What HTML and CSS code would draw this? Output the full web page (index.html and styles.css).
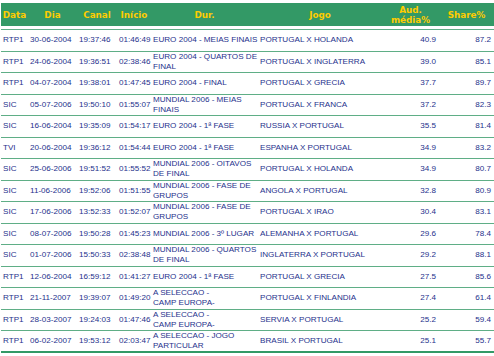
FILE: index.html
```html
<!DOCTYPE html>
<html lang="pt">
<head>
<meta charset="utf-8">
<title>Audiências</title>
<link rel="stylesheet" href="styles.css">
</head>
<body>
<table class="aud">
  <colgroup>
    <col class="c1"><col class="c2"><col class="c3"><col class="c4"><col class="c5"><col class="c6"><col class="c7"><col class="c8">
  </colgroup>
  <thead>
    <tr>
      <th>Data</th><th>Dia</th><th>Canal</th><th>Início</th><th>Dur.</th><th>Jogo</th><th>Aud.<br>média%</th><th>Share%</th>
    </tr>
  </thead>
  <tbody>
    <tr><td>RTP1</td><td>30-06-2004</td><td>19:37:46</td><td>01:46:49</td><td>EURO 2004 - MEIAS FINAIS</td><td>PORTUGAL X HOLANDA</td><td class="num">40.9</td><td class="num">87.2</td></tr>
    <tr><td>RTP1</td><td>24-06-2004</td><td>19:36:51</td><td>02:38:46</td><td>EURO 2004 - QUARTOS DE<br>FINAL</td><td>PORTUGAL X INGLATERRA</td><td class="num">39.0</td><td class="num">85.1</td></tr>
    <tr><td>RTP1</td><td>04-07-2004</td><td>19:38:01</td><td>01:47:45</td><td>EURO 2004 - FINAL</td><td>PORTUGAL X GRECIA</td><td class="num">37.7</td><td class="num">89.7</td></tr>
    <tr><td>SIC</td><td>05-07-2006</td><td>19:50:10</td><td>01:55:07</td><td>MUNDIAL 2006 - MEIAS<br>FINAIS</td><td>PORTUGAL X FRANCA</td><td class="num">37.2</td><td class="num">82.3</td></tr>
    <tr><td>SIC</td><td>16-06-2004</td><td>19:35:09</td><td>01:54:17</td><td>EURO 2004 - 1ª FASE</td><td>RUSSIA X PORTUGAL</td><td class="num">35.5</td><td class="num">81.4</td></tr>
    <tr><td>TVI</td><td>20-06-2004</td><td>19:36:12</td><td>01:54:44</td><td>EURO 2004 - 1ª FASE</td><td>ESPANHA X PORTUGAL</td><td class="num">34.9</td><td class="num">83.2</td></tr>
    <tr><td>SIC</td><td>25-06-2006</td><td>19:51:52</td><td>01:55:52</td><td>MUNDIAL 2006 - OITAVOS<br>DE FINAL</td><td>PORTUGAL X HOLANDA</td><td class="num">34.9</td><td class="num">80.7</td></tr>
    <tr><td>SIC</td><td>11-06-2006</td><td>19:52:06</td><td>01:51:55</td><td>MUNDIAL 2006 - FASE DE<br>GRUPOS</td><td>ANGOLA X PORTUGAL</td><td class="num">32.8</td><td class="num">80.9</td></tr>
    <tr><td>SIC</td><td>17-06-2006</td><td>13:52:33</td><td>01:52:07</td><td>MUNDIAL 2006 - FASE DE<br>GRUPOS</td><td>PORTUGAL X IRAO</td><td class="num">30.4</td><td class="num">83.1</td></tr>
    <tr><td>SIC</td><td>08-07-2006</td><td>19:50:28</td><td>01:45:23</td><td>MUNDIAL 2006 - 3º LUGAR</td><td>ALEMANHA X PORTUGAL</td><td class="num">29.6</td><td class="num">78.4</td></tr>
    <tr><td>SIC</td><td>01-07-2006</td><td>15:50:33</td><td>02:38:48</td><td>MUNDIAL 2006 - QUARTOS<br>DE FINAL</td><td>INGLATERRA X PORTUGAL</td><td class="num">29.2</td><td class="num">88.1</td></tr>
    <tr><td>RTP1</td><td>12-06-2004</td><td>16:59:12</td><td>01:41:27</td><td>EURO 2004 - 1ª FASE</td><td>PORTUGAL X GRECIA</td><td class="num">27.5</td><td class="num">85.6</td></tr>
    <tr><td>RTP1</td><td>21-11-2007</td><td>19:39:07</td><td>01:49:20</td><td>A SELECCAO -<br>CAMP EUROPA-</td><td>PORTUGAL X FINLANDIA</td><td class="num">27.4</td><td class="num">61.4</td></tr>
    <tr><td>RTP1</td><td>28-03-2007</td><td>19:24:03</td><td>01:47:46</td><td>A SELECCAO -<br>CAMP EUROPA-</td><td>SERVIA X PORTUGAL</td><td class="num">25.2</td><td class="num">59.4</td></tr>
    <tr class="last"><td>RTP1</td><td>06-02-2007</td><td>19:53:12</td><td>02:03:47</td><td>A SELECCAO - JOGO<br>PARTICULAR</td><td>BRASIL X PORTUGAL</td><td class="num">25.1</td><td class="num">55.7</td></tr>
  </tbody>
</table>
</body>
</html>
```
FILE: styles.css
```css
html, body {
  margin: 0;
  padding: 0;
  background: #ffffff;
}

.aud {
  margin: 3px 0 0 1px;
  width: 493px;
  table-layout: fixed;
  border-collapse: separate;
  border-spacing: 0;
}

.c1 { width: 27px; }
.c2 { width: 49px; }
.c3 { width: 40px; }
.c4 { width: 34px; }
.c5 { width: 107px; }
.c6 { width: 124px; }
.c7 { width: 57px; }
.c8 { width: 55px; }

.aud th {
  background: #339966;
  background-clip: padding-box;
  color: #ffcc00;
  font-family: "DejaVu Sans", Verdana, sans-serif;
  font-weight: bold;
  font-size: 8.8px;
  line-height: 10px;
  height: 26px;
  padding: 0;
  text-align: center;
  vertical-align: middle;
  border-bottom: 3px solid #ffffff;
  box-sizing: border-box;
}

.aud td {
  font-family: "Liberation Sans", Arial, sans-serif;
  font-size: 8.1px;
  line-height: 10px;
  color: #26318c;
  padding: 0 2px;
  height: 21.5px;
  box-sizing: border-box;
  border-top: 1px solid #5fae86;
  vertical-align: middle;
  white-space: nowrap;
  overflow: hidden;
}

.aud td.num {
  text-align: right;
  padding-right: 3px;
}

.aud tr.last td {
  border-bottom: 2px solid #339966;
}
```
